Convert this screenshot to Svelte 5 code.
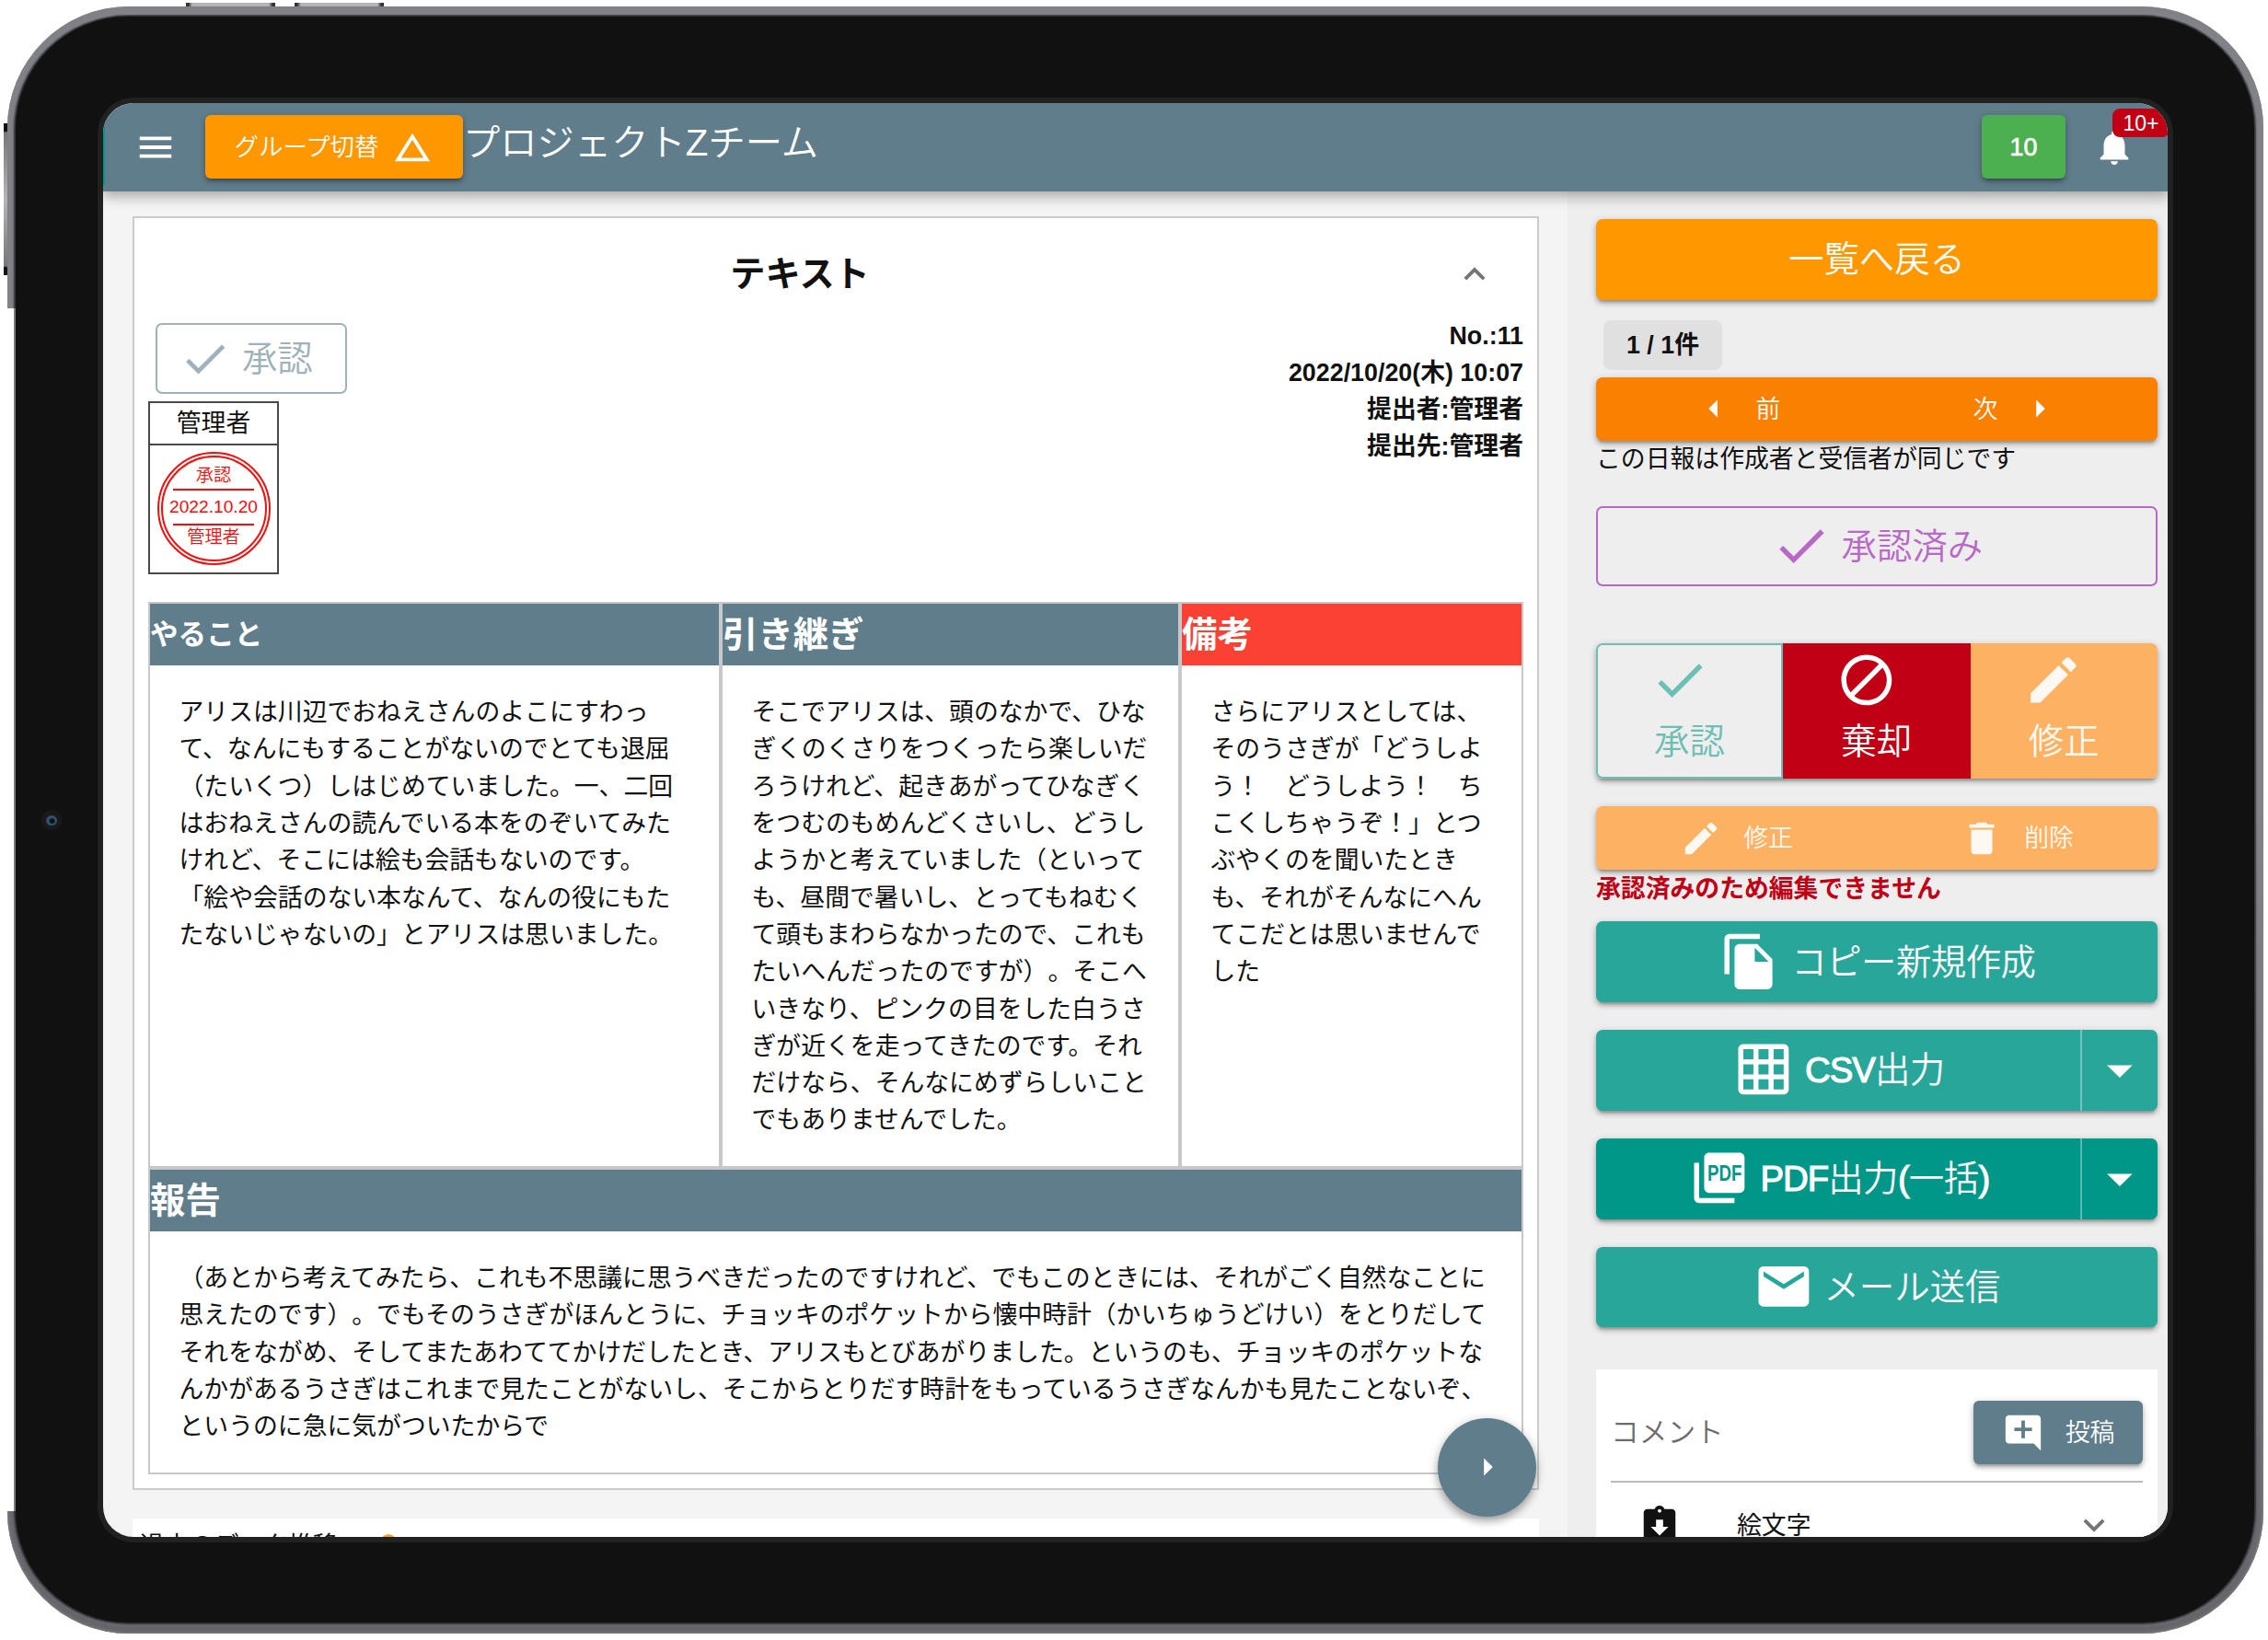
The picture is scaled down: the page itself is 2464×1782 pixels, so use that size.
<script>
  const icons = {
    menu: 'M3 18h18v-2H3v2zm0-5h18v-2H3v2zm0-7v2h18V6H3z',
    triangle: 'M12 7.77L18.39 18H5.61L12 7.77M12 4L2 20h20L12 4z',
    bell: 'M12 22c1.1 0 2-.9 2-2h-4c0 1.1.89 2 2 2zm6-6v-5c0-3.07-1.64-5.64-4.5-6.32V4c0-.83-.67-1.5-1.5-1.5s-1.5.67-1.5 1.5v.68C7.63 5.36 6 7.92 6 11v5l-2 2v1h16v-1l-2-2z',
    up: 'M12 8l-6 6 1.41 1.41L12 10.83l4.59 4.58L18 14z',
    down: 'M16.59 8.59L12 13.17 7.41 8.59 6 10l6 6 6-6z',
    check: 'M9 16.2L4.8 12l-1.4 1.4L9 19 21 7l-1.4-1.4L9 16.2z',
    left: 'M14 7l-5 5 5 5V7z',
    right: 'M10 17l5-5-5-5v10z',
    dropdown: 'M7 10l5 5 5-5z',
    block: 'M12 2C6.48 2 2 6.48 2 12s4.48 10 10 10 10-4.48 10-10S17.52 2 12 2zM4 12c0-4.42 3.58-8 8-8 1.85 0 3.55.63 4.9 1.69L5.69 16.9C4.63 15.55 4 13.85 4 12zm8 8c-1.85 0-3.55-.63-4.9-1.69L18.31 7.1C19.37 8.45 20 10.15 20 12c0 4.42-3.58 8-8 8z',
    edit: 'M3 17.25V21h3.75L17.81 9.94l-3.75-3.75L3 17.25zM20.71 7.04c.39-.39.39-1.02 0-1.41l-2.34-2.34c-.39-.39-1.02-.39-1.41 0l-1.83 1.83 3.75 3.75 1.83-1.83z',
    trash: 'M6 19c0 1.1.9 2 2 2h8c1.1 0 2-.9 2-2V7H6v12zM19 4h-3.5l-1-1h-5l-1 1H5v2h14V4z',
    copy: 'M16 1H4c-1.1 0-2 .9-2 2v14h2V3h12V1zm-1 4l6 6v10c0 1.1-.9 2-2 2H7.99C6.89 23 6 22.1 6 21V7c0-1.1.89-2 1.99-2h7zm-1 7h5.5L14 6.5V12z',
    grid: 'M20 2H4c-1.1 0-2 .9-2 2v16c0 1.1.9 2 2 2h16c1.1 0 2-.9 2-2V4c0-1.1-.9-2-2-2zM8 20H4v-4h4v4zm0-6H4v-4h4v4zm0-6H4V4h4v4zm6 12h-4v-4h4v4zm0-6h-4v-4h4v4zm0-6h-4V4h4v4zm6 12h-4v-4h4v4zm0-6h-4v-4h4v4zm0-6h-4V4h4v4z',
    pages: 'M20 2H8c-1.1 0-2 .9-2 2v12c0 1.1.9 2 2 2h12c1.1 0 2-.9 2-2V4c0-1.1-.9-2-2-2zM4 6H2v14c0 1.1.9 2 2 2h14v-2H4V6z',
    mail: 'M20 4H4c-1.1 0-1.99.9-1.99 2L2 18c0 1.1.9 2 2 2h16c1.1 0 2-.9 2-2V6c0-1.1-.9-2-2-2zm0 4l-8 5-8-5V6l8 5 8-5v2z',
    comment: 'M22 4c0-1.1-.9-2-2-2H4c-1.1 0-2 .9-2 2v12c0 1.1.9 2 2 2h14l4 4V4zm-5 7h-4v4h-2v-4H7V9h4V5h2v4h4v2z',
    clipboard: 'M19 3h-4.18C14.4 1.84 13.3 1 12 1c-1.3 0-2.4.84-2.82 2H5c-1.1 0-2 .9-2 2v14c0 1.1.9 2 2 2h14c1.1 0 2-.9 2-2V5c0-1.1-.9-2-2-2zm-7 0c.55 0 1 .45 1 1s-.45 1-1 1-1-.45-1-1 .45-1 1-1zm0 15l-5-5h3V9h4v4h3l-5 5z'
  };

  const columns = [
    {
      title: 'やること',
      small: true,
      lines: [
        'アリスは川辺でおねえさんのよこにすわっ',
        'て、なんにもすることがないのでとても退屈',
        '（たいくつ）しはじめていました。一、二回',
        'はおねえさんの読んでいる本をのぞいてみた',
        'けれど、そこには絵も会話もないのです。',
        '「絵や会話のない本なんて、なんの役にもた',
        'たないじゃないの」とアリスは思いました。'
      ]
    },
    {
      title: '引き継ぎ',
      lines: [
        'そこでアリスは、頭のなかで、ひな',
        'ぎくのくさりをつくったら楽しいだ',
        'ろうけれど、起きあがってひなぎく',
        'をつむのもめんどくさいし、どうし',
        'ようかと考えていました（といって',
        'も、昼間で暑いし、とってもねむく',
        'て頭もまわらなかったので、これも',
        'たいへんだったのですが）。そこへ',
        'いきなり、ピンクの目をした白うさ',
        'ぎが近くを走ってきたのです。それ',
        'だけなら、そんなにめずらしいこと',
        'でもありませんでした。'
      ]
    },
    {
      title: '備考',
      red: true,
      lines: [
        'さらにアリスとしては、',
        'そのうさぎが「どうしよ',
        'う！　どうしよう！　ち',
        'こくしちゃうぞ！」とつ',
        'ぶやくのを聞いたとき',
        'も、それがそんなにへん',
        'てこだとは思いませんで',
        'した'
      ]
    },
    {
      title: '報告',
      wide: true,
      lines: [
        '（あとから考えてみたら、これも不思議に思うべきだったのですけれど、でもこのときには、それがごく自然なことに',
        '思えたのです）。でもそのうさぎがほんとうに、チョッキのポケットから懐中時計（かいちゅうどけい）をとりだして',
        'それをながめ、そしてまたあわててかけだしたとき、アリスもとびあがりました。というのも、チョッキのポケットな',
        'んかがあるうさぎはこれまで見たことがないし、そこからとりだす時計をもっているうさぎなんかも見たことないぞ、',
        'というのに急に気がついたからで'
      ]
    }
  ];

  const meta = ['No.:11', '2022/10/20(木) 10:07', '提出者:管理者', '提出先:管理者'];
</script>

{#snippet icon(name, size = 'sm')}
  <svg class="icon {size}" viewBox="0 0 24 24" aria-hidden="true"><path d={icons[name]} /></svg>
{/snippet}

<div class="stage">
  <i class="key key-a"></i>
  <i class="key key-b"></i>
  <i class="key key-side"></i>
  <div class="device">
    <div class="bezel">
      <i class="camera"><b></b></i>
      <div class="screen">
        <header class="topbar">
          <span class="menu">{@render icon('menu')}</span>
          <button class="group raised">グループ切替{@render icon('triangle')}</button>
          <h1>プロジェクトZチーム</h1>
          <button class="count raised">10</button>
          <span class="bell">{@render icon('bell')}<em>10+</em></span>
        </header>

        <div class="content">
          <main>
            <article class="card">
              <div class="card-title">
                <h2>テキスト</h2>
                {@render icon('up')}
              </div>
              <div class="card-head">
                <div class="approval">
                  <button class="approve-small">{@render icon('check', 'md')}<span>承認</span></button>
                  <div class="stamp-box">
                    <div class="stamp-name">管理者</div>
                    <div class="stamp-cell">
                      <div class="stamp">
                        <div class="stamp-inner">
                          <span>承認</span>
                          <span class="date">2022.10.20</span>
                          <span>管理者</span>
                        </div>
                      </div>
                    </div>
                  </div>
                </div>
                <div class="meta">
                  {#each meta as line}<div>{line}</div>{/each}
                </div>
              </div>
              <div class="report">
                {#each columns as col}
                  <section class:wide={col.wide}>
                    <h3 class:small={col.small} class:red={col.red}>{col.title}</h3>
                    <div class="body">
                      {#each col.lines as line}<p>{line}</p>{/each}
                    </div>
                  </section>
                {/each}
              </div>
            </article>
            <div class="card history">
              過去のデータ推移<i class="dot"></i>
            </div>
            <button class="fab">{@render icon('right')}</button>
          </main>

          <aside>
            <button class="big back raised">一覧へ戻る</button>
            <span class="pager">1 / 1件</span>
            <div class="pair nav raised">
              <button>{@render icon('left')}<span>前</span></button>
              <button><span>次</span>{@render icon('right')}</button>
            </div>
            <p class="note">この日報は作成者と受信者が同じです</p>
            <button class="big approved">{@render icon('check', 'lg')}<span>承認済み</span></button>
            <div class="triple raised">
              <button class="ok">{@render icon('check', 'lg')}<span>承認</span></button>
              <button class="reject">{@render icon('block', 'lg')}<span>棄却</span></button>
              <button class="fix">{@render icon('edit', 'lg')}<span>修正</span></button>
            </div>
            <div class="pair edit raised">
              <button>{@render icon('edit')}<span>修正</span></button>
              <button>{@render icon('trash')}<span>削除</span></button>
            </div>
            <p class="warn">承認済みのため編集できません</p>
            <button class="big teal tight raised">{@render icon('copy', 'lg')}<span>コピー新規作成</span></button>
            <div class="split csv raised">
              <button class="big tight">{@render icon('grid', 'lg')}<span><b>CSV</b>出力</span></button>
              <button class="drop">{@render icon('dropdown', 'lg')}</button>
            </div>
            <div class="split pdf raised">
              <button class="big tight">
                <svg class="icon lg" viewBox="0 0 24 24" aria-hidden="true">
                  <path d={icons.pages} />
                  <text x="7.3" y="13.1" textLength="13.6" lengthAdjust="spacingAndGlyphs">PDF</text>
                </svg>
                <span><b>PDF</b>出力<b>(</b>一括<b>)</b></span>
              </button>
              <button class="drop">{@render icon('dropdown', 'lg')}</button>
            </div>
            <button class="big teal mail raised">{@render icon('mail', 'lg')}<span>メール送信</span></button>

            <div class="comments">
              <div class="compose">
                <span class="placeholder">コメント</span>
                <button class="post raised">{@render icon('comment')}<span>投稿</span></button>
              </div>
              <div class="emoji">
                {@render icon('clipboard')}
                <span>絵文字</span>
                {@render icon('down')}
              </div>
            </div>
          </aside>
        </div>
      </div>
    </div>
  </div>
  <i class="edge"></i>
</div>

<style>
  :global(body) {
    margin: 0;
    background: #fff;
  }
  .stage {
    position: relative;
    box-sizing: border-box;
    width: 2464px;
    height: 1782px;
    padding: 7px 5px 7px 8px;
    overflow: hidden;
    background: #fff;
    color: #111;
    font-family: 'Liberation Sans', 'Noto Sans CJK JP', sans-serif;
    font-size: 26.83px;
    line-height: 40.32px;
    text-spacing-trim: space-all;
  }
  .stage * {
    box-sizing: border-box;
  }
  button {
    display: flex;
    align-items: center;
    justify-content: center;
    margin: 0;
    padding: 0;
    border: 0;
    background: none;
    color: #fff;
    font: inherit;
    font-weight: 350;
    white-space: nowrap;
  }
  button span {
    padding-top: 2px;
  }
  h1,
  h2,
  h3,
  p {
    margin: 0;
  }
  .icon {
    display: block;
    flex: none;
    width: 46px;
    height: 46px;
    fill: currentColor;
  }
  .icon.md {
    width: 57.6px;
    height: 57.6px;
  }
  .icon.lg {
    width: 65.8px;
    height: 65.8px;
  }
  .raised {
    box-shadow:
      0 2px 9px rgba(0, 0, 0, 0.2),
      0 4px 4px rgba(0, 0, 0, 0.16),
      0 5px 2px -3px rgba(0, 0, 0, 0.14);
  }

  /* tablet hardware */
  .key {
    position: absolute;
    background: linear-gradient(90deg, #333 0 3%, #b5b5b5 7% 93%, #333 97%);
  }
  .key-a {
    left: 202px;
    top: 3px;
    width: 97px;
    height: 6px;
  }
  .key-b {
    left: 320px;
    top: 3px;
    width: 97px;
    height: 6px;
  }
  .key-side {
    left: 4px;
    top: 134px;
    width: 6px;
    height: 165px;
    background: linear-gradient(#111 0 5%, #777 6%, #b5b5b8 50%, #777 94%, #111 95%);
  }
  .edge {
    position: absolute;
    left: 0;
    top: 335px;
    width: 17px;
    height: 1307px;
    background: #fff;
    border-right: 2px solid #777a7d;
  }
  .device {
    position: relative;
    width: 2451px;
    height: 1768px;
    padding: 11px 10px 12px 9px;
    border-radius: 132px;
    background: linear-gradient(#a2a2a8, #a3a3a8 50%, #727176);
    box-shadow:
      inset 0 0 3px 1px #808085,
      inset 0 0 2px 8px rgba(80, 82, 88, 0.4);
  }
  .bezel {
    position: relative;
    width: 100%;
    height: 100%;
    padding: 94px 93px 92px 95px;
    border-radius: 122px;
    background: #111;
    box-shadow: 0 0 2px 2px #2c2d30;
  }
  .camera {
    position: absolute;
    left: 28px;
    top: 862px;
    display: flex;
    align-items: center;
    justify-content: center;
    width: 22px;
    height: 22px;
    border-radius: 50%;
    background: #191919;
  }
  .camera b {
    width: 12px;
    height: 11px;
    border-radius: 50%;
    background: radial-gradient(circle at 55% 55%, #111 0 2px, #23606e 4px, #4b3a78 6px);
  }
  .screen {
    width: 2243px;
    height: 1558px;
    overflow: hidden;
    border-radius: 33px;
    background: #f4f4f4;
    box-shadow: 0 0 0 6px #212121;
  }

  .topbar {
    position: relative;
    z-index: 2;
    display: flex;
    align-items: center;
    width: 2244px;
    height: 95.5px;
    padding: 0 0 0 34px;
    background: #607d8b;
    color: #fff;
    box-shadow:
      0 4px 12px rgba(0, 0, 0, 0.22),
      0 8px 14px rgba(0, 0, 0, 0.12);
  }
  .topbar::before {
    content: '';
    position: absolute;
    left: 0;
    top: 25px;
    width: 2px;
    height: 64px;
    background: #009688;
  }
  .menu {
    width: 77px;
  }
  .group {
    gap: 14px;
    width: 280px;
    height: 69px;
    border-radius: 6px;
    background: #ff9800;
    font-size: 26.4px;
  }
  h1 {
    flex: 1;
    padding: 0 0 7px;
    font-size: 40.3px;
    font-weight: 350;
    line-height: 58px;
  }
  .count {
    width: 91px;
    height: 69px;
    border-radius: 6px;
    background: #4caf50;
    -webkit-text-stroke: 0.7px #fff;
  }
  .bell {
    position: relative;
    width: 112px;
    padding-left: 30px;
  }
  .bell em {
    position: absolute;
    left: 51px;
    top: -19px;
    width: 62px;
    height: 31px;
    border-radius: 8px;
    background: #c10015;
    font-size: 23px;
    font-style: normal;
    line-height: 33px;
    text-align: center;
  }

  .content {
    display: flex;
    height: 1463.5px;
  }
  main {
    position: relative;
    width: 1591px;
    padding: 27.5px 31px 0 32px;
  }
  .card {
    height: 1384px;
    padding: 0 15px;
    border: 2px solid #ccc;
    background: #fff;
  }
  .card-title {
    display: flex;
    align-items: center;
    height: 105px;
    padding: 16px 30px 0 0;
  }
  .card-title .icon {
    margin-left: 5px;
    color: #757575;
  }
  h2 {
    flex: 1;
    padding: 2px 0 0 3px;
    font-size: 38.2px;
    font-weight: 700;
    text-align: center;
  }
  .card-head {
    display: flex;
    justify-content: space-between;
    height: 312px;
  }
  .approval {
    padding-top: 9px;
  }
  .approve-small {
    gap: 11px;
    width: 208px;
    height: 77px;
    margin-left: 8px;
    padding-right: 12px;
    border: 2px solid #9fb1b9;
    border-radius: 7px;
    color: #9fb1b9;
    font-size: 38.4px;
  }
  .stamp-box {
    width: 142px;
    height: 188px;
    margin-top: 7.5px;
    border: 2px solid #4a4a4a;
  }
  .stamp-name {
    height: 46px;
    border-bottom: 2px solid #4a4a4a;
    line-height: 45px;
    text-align: center;
  }
  .stamp-cell {
    display: flex;
    justify-content: center;
    padding-top: 7px;
  }
  .stamp {
    width: 123px;
    height: 123px;
    padding: 2px;
    border: 2px solid #f80c0c;
    border-radius: 50%;
    color: #f80c0c;
    font-size: 19.2px;
    font-weight: 350;
    line-height: 26px;
    text-align: center;
  }
  .stamp-inner {
    display: flex;
    flex-direction: column;
    align-items: center;
    height: 115px;
    padding-top: 7px;
    border: 2px solid #f80c0c;
    border-radius: 50%;
  }
  .stamp-inner .date {
    width: 88px;
    height: 40px;
    margin: 1px 0 0;
    border: solid #f80c0c;
    border-width: 2px 0;
    line-height: 36px;
    text-indent: -4px;
    white-space: nowrap;
  }
  .meta {
    padding-top: 2.5px;
    font-weight: 700;
    text-align: right;
  }
  .report {
    display: grid;
    grid-template-columns: 618px 495px 369px;
    grid-template-rows: 611px 329px;
    gap: 4px;
    width: 1494px;
    border: 2px solid #c8c8c8;
    background: #c8c8c8;
  }
  section {
    background: #fff;
  }
  section.wide {
    grid-column: 1 / -1;
  }
  h3 {
    height: 67px;
    background: #607d8b;
    color: #fff;
    font-size: 38.4px;
    font-weight: 700;
    line-height: 67px;
  }
  h3.small {
    font-size: 30.6px;
  }
  h3.red {
    background: #fa4134;
  }
  .body {
    padding: 31px 0 0 31.5px;
  }
  .body p {
    height: 40.32px;
    white-space: nowrap;
  }
  .history {
    display: flex;
    height: 80px;
    margin-top: 31px;
    padding: 10px 0 0 8px;
    border: 0;
  }
  .dot {
    width: 18px;
    height: 18px;
    margin: 7px 0 0 46px;
    border-radius: 50%;
    background: #f5a12a;
  }
  .fab {
    position: absolute;
    left: 1450px;
    top: 1333px;
    width: 107px;
    height: 107px;
    border-radius: 50%;
    background: #607d8b;
    box-shadow:
      0 5px 9px rgba(0, 0, 0, 0.28),
      0 2px 14px rgba(0, 0, 0, 0.14);
  }

  aside {
    flex: 1;
    padding: 30.5px 12px 0 31px;
    background: #eee;
  }
  .big {
    gap: 11px;
    width: 610px;
    height: 87.5px;
    border-radius: 7px;
    font-size: 38.4px;
  }
  .tight {
    gap: 12px;
    padding-left: 2px;
    letter-spacing: -0.5px;
  }
  .back {
    background: #ff9800;
  }
  .pager {
    display: block;
    width: 129px;
    height: 54px;
    margin: 22px 0 8px 8px;
    border-radius: 8px;
    background: #e0e0e0;
    font-weight: 700;
    line-height: 55px;
    text-align: center;
  }
  .pair {
    display: flex;
    height: 69px;
    border-radius: 7px;
  }
  .pair button {
    flex: 1;
    gap: 23px;
  }
  .nav {
    background: #f98000;
  }
  .note {
    height: 71px;
    padding-top: 0.5px;
  }
  .approved {
    border: 2px solid #ba68c8;
    color: #ba68c8;
  }
  .triple {
    display: grid;
    grid-template-columns: 203px 203.5px 203.5px;
    height: 147px;
    margin-top: 62px;
    border-radius: 7px;
  }
  .triple button {
    flex-direction: column;
    font-size: 38.4px;
  }
  .triple .icon {
    margin: -2px 22px 0 0;
  }
  .triple span {
    height: 66px;
    line-height: 66px;
  }
  .ok {
    border: 2px solid #6dbfb4;
    border-radius: 7px 0 0 7px;
    background: #eee;
    color: #6dbfb4;
  }
  .reject {
    background: #c10015;
  }
  .fix {
    border-radius: 0 7px 7px 0;
    background: #fcb262;
    color: #fdf8f2;
  }
  .edit {
    margin-top: 30px;
    background: #fcb262;
  }
  .edit button {
    color: #fdf8f2;
  }
  .warn {
    height: 56px;
    padding-top: 1px;
    color: #c10015;
    font-weight: 700;
  }
  .teal {
    background: #28a69a;
  }
  .split {
    display: flex;
    height: 88px;
    margin-top: 30px;
    border-radius: 7px;
    background: #28a69a;
  }
  .split .big {
    width: 526px;
  }
  .split b {
    font-weight: 400;
    letter-spacing: -1px;
    -webkit-text-stroke: 1.1px #fff;
  }
  .split text {
    fill: #009688;
    font: 700 8.6px 'Liberation Sans', sans-serif;
    letter-spacing: 0;
  }
  .split.pdf {
    background: #009688;
  }
  .drop {
    width: 84px;
    border-left: 2px solid rgba(255, 255, 255, 0.35);
  }
  .mail {
    margin-top: 30px;
  }
  .comments {
    height: 300px;
    margin-top: 46px;
    padding: 0 16px;
    background: #fff;
  }
  .compose {
    display: flex;
    align-items: center;
    justify-content: space-between;
    height: 123px;
    padding-top: 16px;
    border-bottom: 2px solid #bbb;
  }
  .placeholder {
    padding-top: 1px;
    color: #6c6c6c;
    font-size: 30.7px;
    font-weight: 350;
  }
  .post {
    gap: 23px;
    width: 184px;
    height: 69px;
    border-radius: 6px;
    background: #607d8b;
  }
  .emoji {
    display: flex;
    align-items: center;
    height: 92px;
    padding: 0 30px 0 30px;
  }
  .emoji span {
    flex: 1;
    padding: 2px 0 0 61px;
  }
  .emoji .icon:last-child {
    color: #757575;
  }
</style>
